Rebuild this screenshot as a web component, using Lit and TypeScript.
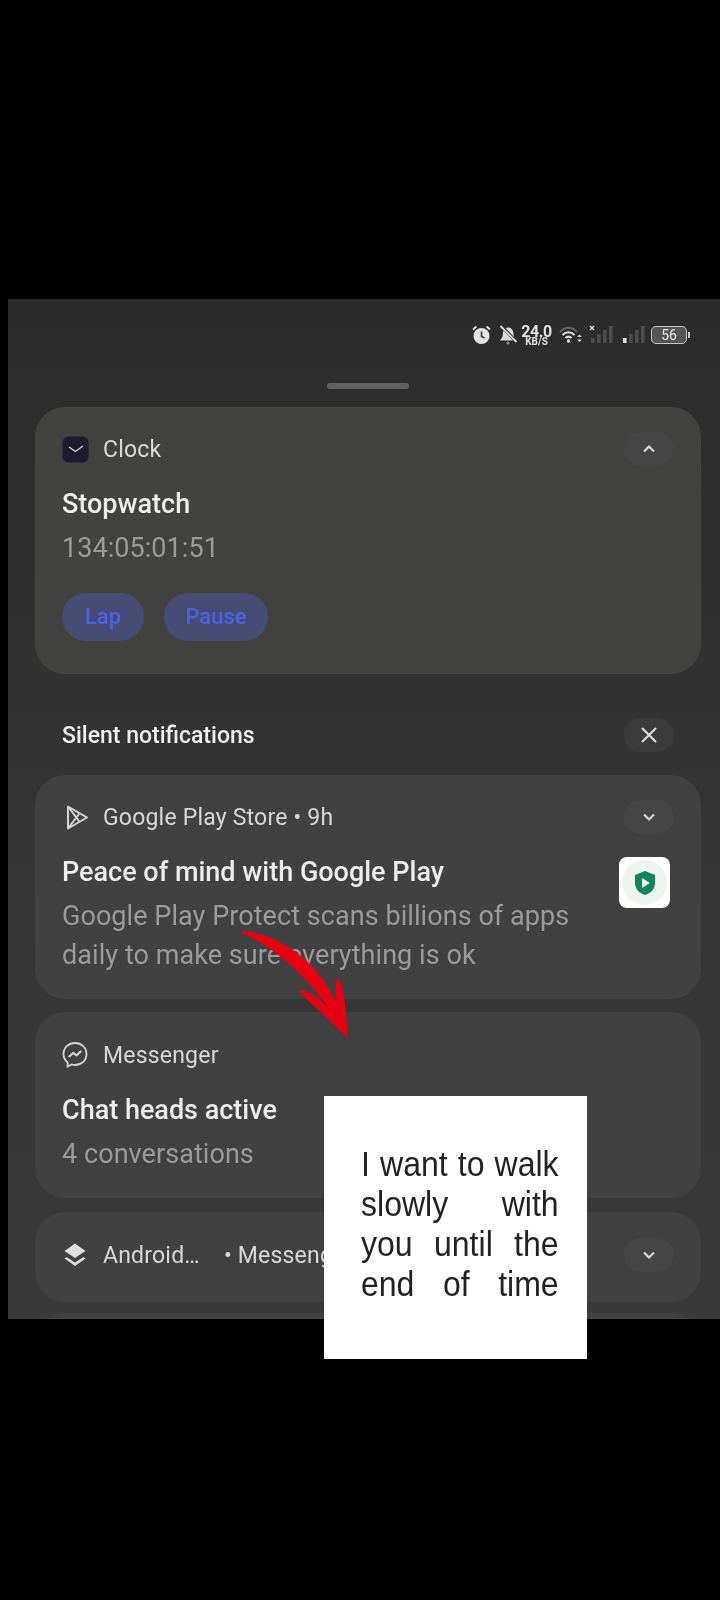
import { LitElement, html, css, svg } from 'lit';
import { customElement } from 'lit/decorators.js';

const chevron = (up = false) => html`
  <svg width="14" height="10" viewBox="0 0 14 10">
    <path d=${up ? 'M2 7.5 L7 2.5 L12 7.5' : 'M2 2.5 L7 7.5 L12 2.5'} fill="none" stroke="#d6d6d6" stroke-width="2.2" />
  </svg>`;

const clockIcon = html`
  <svg width="27" height="27" viewBox="0 0 27 27">
    <rect x="0.5" y="0.5" width="26" height="26" rx="6" fill="#1e1b2e" />
    <path d="M7 11 L13.5 15.5 L21 10" fill="none" stroke="#d8d8e0" stroke-width="1.3" />
  </svg>`;

const playIcon = html`
  <svg width="26" height="27" viewBox="0 0 26 27">
    <path d="M6 2.5 L25 13.5 L6 24.5 Z M6 2.5 L17 17 M6 24.5 L17 10" fill="none" stroke="#d4d4d4" stroke-width="2" stroke-linejoin="round" />
  </svg>`;

const messengerIcon = html`
  <svg width="26" height="28" viewBox="0 0 26 28">
    <path d="M13 2 C6.5 2 1.5 6.7 1.5 13 C1.5 16.5 3 19.4 5.6 21.4 L5.6 25.6 L9.6 23.4 C10.7 23.8 11.8 24 13 24 C19.5 24 24.5 19.3 24.5 13 C24.5 6.7 19.5 2 13 2 Z" fill="none" stroke="#d4d4d4" stroke-width="1.8" />
    <path d="M6.8 16 L11 12 L14.6 14.4 L19.2 10" fill="none" stroke="#d4d4d4" stroke-width="2.2" stroke-linejoin="round" />
  </svg>`;

const layersIcon = html`
  <svg width="26" height="26" viewBox="0 0 26 26">
    <path d="M13 1.5 L23.5 9 L13 16 L2.5 9 Z" fill="#e0e0e0" />
    <path d="M4.5 15 L13 20.6 L21.5 15 L23.5 16.5 L13 24 L2.5 16.5 Z" fill="#e0e0e0" />
  </svg>`;

const alarmIcon = html`
  <svg width="19" height="20" viewBox="0 0 19 20">
    <circle cx="9.5" cy="11" r="8" fill="#e2e2e2" />
    <path d="M9.5 6.5 V11.5 L12.5 13" fill="none" stroke="#3a3a3a" stroke-width="1.6" />
    <path d="M1 4.5 L4.5 1.5 M18 4.5 L14.5 1.5" stroke="#e2e2e2" stroke-width="2" />
  </svg>`;

const bellOffIcon = html`
  <svg width="19" height="20" viewBox="0 0 19 20">
    <path d="M4.5 5.5 C3.8 7 4 10.5 3.2 12.5 L1 15.5 H14 Z M6.8 3.2 C8.8 1.6 13.4 2.6 14.2 7 L15 12 Z" fill="#dcdcdc" />
    <path d="M1.5 1 L17.5 17" stroke="#dcdcdc" stroke-width="1.8" />
    <circle cx="9" cy="18" r="1.6" fill="#8c8c8c" />
  </svg>`;

const wifiIcon = html`
  <svg width="25" height="20" viewBox="0 0 25 20">
    <path d="M1 7 C6 1.6 13 1.6 18 7" fill="none" stroke="#6a6a6a" stroke-width="1.8" />
    <path d="M3.5 10 C7 6.4 12 6.4 15.5 10 M6.5 13 C8.4 11.2 10.6 11.2 12.5 13" fill="none" stroke="#e2e2e2" stroke-width="2" />
    <circle cx="9.5" cy="16" r="1.7" fill="#e2e2e2" />
    <path d="M18 12 L20.5 9.6 L23 12 Z M18 14.6 H23 L20.5 17 Z" fill="#d0d0d0" />
  </svg>`;

// signal bars, dim with an optional lit first bar or x mark
const signalIcon = (mark: boolean) => html`
  <svg width="25" height="20" viewBox="0 0 25 20">
    ${[0, 1, 2, 3].map((i) => svg`
      <rect x=${2 + i * 6} y=${13 - i * 4} width="3.6" height=${5 + i * 4}
        fill=${!mark && i === 0 ? '#dedede' : '#4c4c4c'} />`)}
    ${mark ? svg`<path d="M1 1 L5 5 M5 1 L1 5" stroke="#d4d4d4" stroke-width="1.5" />` : ''}
  </svg>`;

@customElement('app-root')
export class AppRoot extends LitElement {
  static styles = css`
    :host {
      display: block;
      position: relative;
      height: 1600px;
      background: #000;
      overflow: hidden;
      font-family: Roboto, 'Liberation Sans', sans-serif;
    }

    .spacer {
      height: 299px;
    }

    .screen {
      margin-left: 8px;
      height: 1020px;
      box-sizing: border-box;
      padding: 24px 19px 0 27px;
      overflow: hidden;
      background: linear-gradient(#2b2b2b, #2e2e2e 15%, #363636 60%, #393939);
      filter: blur(0.6px);
    }

    .status {
      display: flex;
      justify-content: flex-end;
      align-items: center;
      height: 24px;
      margin-right: 11px;
      color: #e2e2e2;
    }

    .status svg {
      display: block;
    }

    .bell {
      margin-left: 8px;
    }

    .speed {
      margin: 0 7px 0 3px;
      width: 31px;
      text-align: center;
      font-weight: 700;
      font-size: 16px;
      line-height: 13px;
      letter-spacing: -0.4px;
    }

    .speed span {
      display: block;
      font-size: 10px;
      line-height: 8px;
      letter-spacing: 0;
    }

    .sig1 {
      margin-left: 5px;
    }

    .sig2 {
      margin-left: 7px;
    }

    .battery {
      margin-left: 5px;
      width: 34px;
      height: 16px;
      border: 1.6px solid #c8c8c8;
      border-radius: 5px;
      background: #555;
      color: #e6e6e6;
      font-size: 14px;
      line-height: 16px;
      text-align: center;
    }

    .nub {
      width: 2px;
      height: 6px;
      margin-left: 1px;
      background: #c8c8c8;
    }

    .handle {
      width: 82px;
      height: 6px;
      margin: 36px auto 18px;
      border-radius: 3px;
      background: #606060;
    }

    .card {
      background: #414141;
      border-radius: 30px;
      padding: 26px 27px 24px 27px;
      margin-bottom: 14px;
    }

    .first {
      background: #424341;
      padding-bottom: 33px;
      margin-bottom: 0;
    }

    .head {
      display: flex;
      align-items: center;
      height: 32px;
      color: #d8d8d8;
      font-size: 23px;
      letter-spacing: 0.2px;
    }

    .icon {
      width: 26px;
      display: flex;
      justify-content: center;
      margin-right: 15px;
    }

    .icon svg {
      display: block;
      flex: none;
    }

    .name {
      flex: 1;
      white-space: nowrap;
    }

    .dots {
      margin-left: 24px;
    }

    .pill {
      width: 50px;
      height: 34px;
      border-radius: 17px;
      background: #464646;
      display: flex;
      align-items: center;
      justify-content: center;
      flex: none;
    }

    .section .pill {
      background: #3b3b3b;
    }

    .title {
      margin-top: 23px;
      font-size: 27px;
      font-weight: 500;
      line-height: 32px;
      color: #ededed;
      white-space: nowrap;
    }

    .sub {
      margin-top: 9px;
      font-size: 27px;
      line-height: 39px;
      color: #9b9b9b;
      letter-spacing: 0.06px;
      white-space: nowrap;
    }

    .actions {
      display: flex;
      gap: 20px;
      margin-top: 25px;
    }

    .btn {
      height: 48px;
      border-radius: 24px;
      background: #464c74;
      color: #4f62e6;
      font-size: 22px;
      font-weight: 500;
      line-height: 48px;
      text-align: center;
    }

    .lap {
      width: 82px;
    }

    .pause {
      width: 104px;
    }

    .section {
      display: flex;
      justify-content: space-between;
      align-items: center;
      height: 34px;
      margin: 44px 0 23px;
      padding: 0 27px;
      color: #f0f0f0;
      font-size: 23px;
      font-weight: 500;
    }

    .content {
      display: flex;
      justify-content: space-between;
    }

    .thumb {
      width: 51px;
      height: 51px;
      margin: 24px 4px 0 0;
      border-radius: 8px;
      background: radial-gradient(circle, #edf4f0 60%, #fff 64%);
      display: flex;
      align-items: center;
      justify-content: center;
    }

    .play {
      margin-bottom: 13px;
    }

    .chat {
      padding-top: 27px;
    }

    .compact {
      padding-top: 27px;
      padding-bottom: 31px;
      margin-bottom: 11px;
    }

    .next {
      height: 40px;
      margin: 0;
      padding: 0;
      border-radius: 30px 30px 0 0;
    }

    .arrow {
      position: absolute;
      left: 220px;
      top: 910px;
    }

    .note {
      position: absolute;
      left: 324px;
      top: 1096px;
      width: 263px;
      height: 263px;
      box-sizing: border-box;
      padding: 48px 0 0 37px;
      background: #fff;
      color: #222;
      font-family: 'Liberation Sans', Arial, sans-serif;
      font-size: 35px;
      line-height: 40px;
      filter: blur(0.6px);
    }

    .note div {
      width: 216px;
      transform: scaleX(0.915);
      transform-origin: left center;
      text-align: justify;
      text-align-last: justify;
      white-space: nowrap;
    }
  `;

  render() {
    return html`
      <div class="spacer"></div>
      <div class="screen">
        <div class="status">
          ${alarmIcon}
          <div class="bell">${bellOffIcon}</div>
          <div class="speed">24.0<span>KB/S</span></div>
          ${wifiIcon}
          <div class="sig1">${signalIcon(true)}</div>
          <div class="sig2">${signalIcon(false)}</div>
          <div class="battery">56</div>
          <div class="nub"></div>
        </div>
        <div class="handle"></div>

        <div class="card first">
          <div class="head">
            <div class="icon">${clockIcon}</div>
            <div class="name">Clock</div>
            <div class="pill">${chevron(true)}</div>
          </div>
          <div class="title">Stopwatch</div>
          <div class="sub">134:05:01:51</div>
          <div class="actions">
            <div class="btn lap">Lap</div>
            <div class="btn pause">Pause</div>
          </div>
        </div>

        <div class="section">
          <div>Silent notifications</div>
          <div class="pill">
            <svg width="18" height="18" viewBox="0 0 18 18">
              <path d="M2 2 L16 16 M16 2 L2 16" stroke="#dcdcdc" stroke-width="2.2" />
            </svg>
          </div>
        </div>

        <div class="card play">
          <div class="head">
            <div class="icon">${playIcon}</div>
            <div class="name">Google Play Store • 9h</div>
            <div class="pill">${chevron()}</div>
          </div>
          <div class="content">
            <div>
              <div class="title">Peace of mind with Google Play</div>
              <div class="sub">
                Google Play Protect scans billions of apps<br />daily to make sure everything is ok
              </div>
            </div>
            <div class="thumb">
              <svg width="24" height="26" viewBox="0 0 24 26">
                <path d="M12 1 L22 5 V13 C22 19 17.5 23.5 12 25 C6.5 23.5 2 19 2 13 V5 Z" fill="#12855c" />
                <path d="M9 8 L17 13 L9 18 Z" fill="#e6f3ee" />
              </svg>
            </div>
          </div>
        </div>

        <div class="card chat">
          <div class="head">
            <div class="icon">${messengerIcon}</div>
            <div class="name">Messenger</div>
          </div>
          <div class="title">Chat heads active</div>
          <div class="sub">4 conversations</div>
        </div>

        <div class="card compact">
          <div class="head">
            <div class="icon">${layersIcon}</div>
            <div class="name">Android…<span class="dots">• Messenger</span></div>
            <div class="pill">${chevron()}</div>
          </div>
        </div>
        <div class="card next"></div>
      </div>

      <svg class="arrow" width="150" height="140" viewBox="0 0 450 420">
        <path d="M65 62 C155 68 285 135 345 272 C348 250 345 225 350 205 C368 205 380 290 382 385 C340 340 290 295 235 245 C250 232 295 258 325 293 C265 205 165 112 65 68 Z" fill="#e60012" />
      </svg>

      <div class="note">
        <div>I want to walk</div>
        <div>slowly with</div>
        <div>you until the</div>
        <div>end of time</div>
      </div>
    `;
  }
}
